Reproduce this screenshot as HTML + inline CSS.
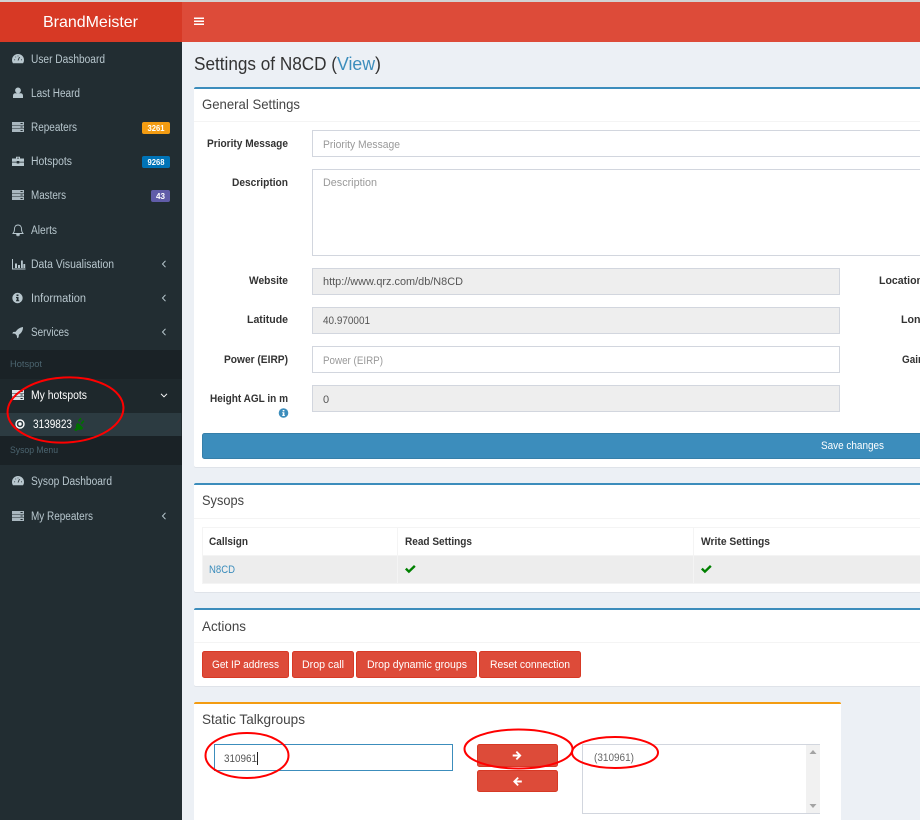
<!DOCTYPE html>
<html lang="en">
<head>
<meta charset="utf-8">
<title>BrandMeister - Settings of N8CD</title>
<style>
html,body{margin:0;padding:0;width:920px;height:820px;overflow:hidden;background:#ecf0f5}
svg{display:block}
text{font-family:"Liberation Sans",sans-serif}
.n{font-size:11.5px;fill:#b8c7ce}
.w{font-size:11.5px;fill:#fff}
.s{font-size:9.5px;fill:#4b646f}
.t{font-size:14px;fill:#444}
.l{font-size:11px;font-weight:bold;fill:#333}
.p{font-size:11px;fill:#999}
.v{font-size:11px;fill:#555}
.b{font-size:11px;fill:#fff}
.bd{font-size:8.5px;font-weight:bold;fill:#fff}
.in{fill:#fff;stroke:#d2d6de}
.ro{fill:#eee;stroke:#d2d6de}
.btn{fill:#dd4b39;stroke:#d73925}
.e{fill:none;stroke:#f00;stroke-width:2}
</style>
</head>
<body>
<svg width="920" height="820" viewBox="0 0 920 820" xmlns="http://www.w3.org/2000/svg">
<defs>
<g id="gauge"><path d="M0 6C0 2.500 2.700 0 6 0s6 2.500 6 6c0 1.300-.3 2.300-1 3.200H1C.3 8.300 0 7.300 0 6z" fill="#b8c7ce"/><path d="M6 6.500L7.500 3M2.200 5.800h.9M9 5.800h.9M3.500 3h.6M6 1.600v.8" stroke="#222d32" stroke-width=".9"/></g>
<g id="server"><path d="M0 0h12v3H0zM0 3.500h12v3H0zM0 7h12v3H0z" fill="#b8c7ce" opacity=".9"/><path d="M8.500 1.500h2.200M8.500 5h2.200M8.500 8.500h2.200" stroke="#222d32" stroke-width=".9"/></g>
<g id="serverw"><path d="M0 0h12v3H0zM0 3.500h12v3H0zM0 7h12v3H0z" fill="#d9e2e6"/><path d="M8.500 1.500h2.200M8.500 5h2.200M8.500 8.500h2.200" stroke="#1e282c" stroke-width=".9"/></g>
<g id="brief"><path d="M0 2.500h12v3.300H7.300v-.8H4.700v.8H0zM0 6.500h4.700v1h2.600v-1H12V10H0zM4 2.500V.8h4v1.700H7V1.700H5v.8z" fill="#b8c7ce"/></g>
<path id="chev" d="M3 0L0 3.200L3 6.400" fill="none" stroke="#b8c7ce" stroke-width="1"/>
<path id="chk" d="M0 4.500L1.700 2.800L3.900 5L9 0L10.700 1.700L3.900 8.200z" fill="#008000"/>
</defs>

<!-- page chrome -->
<rect width="920" height="820" fill="#ecf0f5"/>
<rect width="920" height="2" fill="#d2d2d2"/>
<rect x="182" y="2" width="738" height="40" fill="#dd4b39"/>
<rect x="0" y="2" width="182" height="40" fill="#d73925"/>
<text x="43" y="27" font-size="16" fill="#fff" textLength="95" lengthAdjust="spacingAndGlyphs">BrandMeister</text>
<path d="M194 17.500h10v1.500h-10zM194 20.500h10v1.500h-10zM194 23.500h10v1.500h-10z" fill="#fff"/>

<!-- sidebar -->
<rect x="0" y="42" width="182" height="778" fill="#222d32"/>
<rect x="0" y="350" width="182" height="29" fill="#1a2226"/>
<rect x="0" y="379" width="182" height="34" fill="#1e282c"/>
<rect x="0" y="413" width="181" height="23" fill="#2c3b41"/>
<rect x="0" y="436" width="182" height="29" fill="#1a2226"/>

<text class="n" x="31" y="63" textLength="74" lengthAdjust="spacingAndGlyphs">User Dashboard</text>
<text class="n" x="31" y="97" textLength="49" lengthAdjust="spacingAndGlyphs">Last Heard</text>
<text class="n" x="31" y="131" textLength="46" lengthAdjust="spacingAndGlyphs">Repeaters</text>
<text class="n" x="31" y="165" textLength="41" lengthAdjust="spacingAndGlyphs">Hotspots</text>
<text class="n" x="31" y="199" textLength="35" lengthAdjust="spacingAndGlyphs">Masters</text>
<text class="n" x="31" y="234" textLength="26" lengthAdjust="spacingAndGlyphs">Alerts</text>
<text class="n" x="31" y="268" textLength="83" lengthAdjust="spacingAndGlyphs">Data Visualisation</text>
<text class="n" x="31" y="302" textLength="55" lengthAdjust="spacingAndGlyphs">Information</text>
<text class="n" x="31" y="336" textLength="38" lengthAdjust="spacingAndGlyphs">Services</text>
<text class="s" x="10" y="367" textLength="32" lengthAdjust="spacingAndGlyphs">Hotspot</text>
<text class="w" x="31" y="399" textLength="56" lengthAdjust="spacingAndGlyphs">My hotspots</text>
<text class="w" x="33" y="428" textLength="39" lengthAdjust="spacingAndGlyphs">3139823</text>
<text class="s" x="10" y="453" textLength="48" lengthAdjust="spacingAndGlyphs">Sysop Menu</text>
<text class="n" x="31" y="485" textLength="81" lengthAdjust="spacingAndGlyphs">Sysop Dashboard</text>
<text class="n" x="31" y="520" textLength="62" lengthAdjust="spacingAndGlyphs">My Repeaters</text>

<!-- sidebar icons -->
<use href="#gauge" x="12" y="54"/>
<path d="M18 87.500a2.900 2.900 0 1 1 0 5.800a2.900 2.900 0 0 1 0-5.800zM13 98v-2.300c0-1.400 1-2.400 2.300-2.400h5.400c1.300 0 2.300 1 2.300 2.400V98z" fill="#b8c7ce"/>
<use href="#server" x="12" y="122"/>
<use href="#brief" x="12" y="156"/>
<use href="#server" x="12" y="190"/>
<path d="M18 225c-2.500 0-3.500 2-3.500 4c0 2.500-.7 3.500-1.500 4.500h10c-.8-1-1.500-2-1.500-4.500c0-2-1-4-3.500-4zM16.700 234.500h2.600c0 .8-.6 1.300-1.300 1.300s-1.300-.5-1.300-1.300z" fill="none" stroke="#b8c7ce" stroke-width=".9"/>
<path d="M12.500 259v10h13" fill="none" stroke="#b8c7ce"/>
<path d="M15 263.500h2v4.500h-2zM18 265h2v3h-2zM21 260.500h1.800v7.500H21zM23.400 264h1.800v4h-1.800z" fill="#b8c7ce"/>
<circle cx="17.500" cy="298" r="5.200" fill="#b8c7ce"/><path d="M16.500 294.500h2v1.600h-2zM16 297h2.500v3.300h.7v1h-3.200v-1h.7V298H16z" fill="#222d32"/>
<path d="M23 327c-3 .4-5.500 2-7.300 4.700l-2.600.3l-.8 1.500l2.800.3l1.700 1.800l.3 2.700l1.500-.9l.3-2.600c2.700-1.900 4.200-4.600 4.100-7.800z" fill="#b8c7ce"/>
<use href="#serverw" x="12" y="390"/>
<circle cx="20" cy="424" r="4" fill="none" stroke="#fff" stroke-width="1.400"/><circle cx="20" cy="424" r="1.700" fill="#fff"/>
<path d="M74 430l2.300-2.500l-.6-.7l.7-2.900l1.600-1l5.200 4.800l-1 1.700l-2.900.7l-.8-.7l-2.500 1.900zM80.600 423.300l2.600-3.200l1.200 1.100l-2.500 3.200zM77.800 420.800l2.600-3l1.200 1.100l-2.600 3z" fill="#007000"/>
<use href="#gauge" x="12" y="476"/>
<use href="#server" x="12" y="511"/>

<!-- chevrons -->
<use href="#chev" x="162.500" y="260.800"/>
<use href="#chev" x="162.500" y="294.800"/>
<use href="#chev" x="162.500" y="328.800"/>
<use href="#chev" x="162.500" y="512.800"/>
<path d="M161 393.800L164 396.800L167 393.800" fill="none" stroke="#fff" stroke-width="1"/>

<!-- badges -->
<rect x="142" y="122" width="28" height="12" rx="2" fill="#f39c12"/>
<text class="bd" x="147.500" y="131" textLength="17" lengthAdjust="spacingAndGlyphs">3261</text>
<rect x="142" y="156" width="28" height="12" rx="2" fill="#0073b7"/>
<text class="bd" x="147.500" y="165" textLength="17" lengthAdjust="spacingAndGlyphs">9268</text>
<rect x="151" y="190" width="19" height="12" rx="2" fill="#605ca8"/>
<text class="bd" x="156" y="199" textLength="9" lengthAdjust="spacingAndGlyphs">43</text>

<!-- page title -->
<text x="194" y="70" font-size="18" fill="#333" textLength="143" lengthAdjust="spacingAndGlyphs">Settings of N8CD (</text>
<text x="337" y="70" font-size="18" fill="#3c8dbc" textLength="38" lengthAdjust="spacingAndGlyphs">View</text>
<text x="375" y="70" font-size="18" fill="#333">)</text>

<!-- General settings -->
<rect x="194" y="88" width="740" height="380" rx="2" fill="#dfe3e9"/>
<rect x="194" y="87" width="740" height="380" rx="2" fill="#fff"/>
<path d="M194 89a2 2 0 0 1 2-2H934v2z" fill="#3c8dbc"/>
<rect x="194" y="121" width="740" height="1" fill="#f4f4f4"/>
<text class="t" x="202" y="109" textLength="98" lengthAdjust="spacingAndGlyphs">General Settings</text>

<text class="l" x="207" y="147" textLength="81" lengthAdjust="spacingAndGlyphs">Priority Message</text>
<text class="l" x="232" y="186" textLength="56" lengthAdjust="spacingAndGlyphs">Description</text>
<text class="l" x="249" y="284" textLength="39" lengthAdjust="spacingAndGlyphs">Website</text>
<text class="l" x="247" y="323" textLength="41" lengthAdjust="spacingAndGlyphs">Latitude</text>
<text class="l" x="224" y="363" textLength="64" lengthAdjust="spacingAndGlyphs">Power (EIRP)</text>
<text class="l" x="210" y="402" textLength="78" lengthAdjust="spacingAndGlyphs">Height AGL in m</text>
<circle cx="283.500" cy="413" r="4.800" fill="#3c8dbc"/>
<path d="M282.700 410h1.700v1.400h-1.700zM282.200 412.200h2.200v3h.6v.8h-2.900v-.8h.6v-2.200h-.5z" fill="#fff"/>
<text class="l" x="879" y="284" textLength="44" lengthAdjust="spacingAndGlyphs">Location</text>
<text class="l" x="901" y="323" textLength="26" lengthAdjust="spacingAndGlyphs">Long</text>
<text class="l" x="902" y="363" textLength="22" lengthAdjust="spacingAndGlyphs">Gain</text>

<rect class="in" x="312.500" y="130.500" width="640" height="26"/>
<text class="p" x="323" y="148" textLength="77" lengthAdjust="spacingAndGlyphs">Priority Message</text>
<rect class="in" x="312.500" y="169.500" width="640" height="86"/>
<text class="p" x="323" y="186" textLength="54" lengthAdjust="spacingAndGlyphs">Description</text>
<rect class="ro" x="312.500" y="268.500" width="527" height="26"/>
<text class="v" x="323" y="285" textLength="140" lengthAdjust="spacingAndGlyphs">http://www.qrz.com/db/N8CD</text>
<rect class="ro" x="312.500" y="307.500" width="527" height="26"/>
<text class="v" x="323" y="324" textLength="47" lengthAdjust="spacingAndGlyphs">40.970001</text>
<rect class="in" x="312.500" y="346.500" width="527" height="26"/>
<text class="p" x="323" y="364" textLength="60" lengthAdjust="spacingAndGlyphs">Power (EIRP)</text>
<rect class="ro" x="312.500" y="385.500" width="527" height="26"/>
<text class="v" x="323" y="403">0</text>

<rect x="202.500" y="433.500" width="740" height="25" rx="2" fill="#3c8dbc" stroke="#367fa9"/>
<text class="b" x="821" y="449" textLength="63" lengthAdjust="spacingAndGlyphs">Save changes</text>

<!-- Sysops -->
<rect x="194" y="484" width="740" height="109" rx="2" fill="#dfe3e9"/>
<rect x="194" y="483" width="740" height="109" rx="2" fill="#fff"/>
<path d="M194 485a2 2 0 0 1 2-2H934v2z" fill="#3c8dbc"/>
<rect x="194" y="518" width="740" height="1" fill="#f4f4f4"/>
<text class="t" x="202" y="505" textLength="42" lengthAdjust="spacingAndGlyphs">Sysops</text>
<rect x="202.500" y="527.500" width="740" height="56" fill="#fff" stroke="#f4f4f4"/>
<rect x="203" y="556" width="740" height="27" fill="#ededed"/>
<path d="M203 555.500h720M397.500 528v56M693.500 528v56" stroke="#f4f4f4"/>
<text class="l" x="209" y="545" textLength="39" lengthAdjust="spacingAndGlyphs">Callsign</text>
<text class="l" x="405" y="545" textLength="67" lengthAdjust="spacingAndGlyphs">Read Settings</text>
<text class="l" x="701" y="545" textLength="69" lengthAdjust="spacingAndGlyphs">Write Settings</text>
<text x="209" y="573" font-size="11" fill="#3c8dbc" textLength="26" lengthAdjust="spacingAndGlyphs">N8CD</text>
<use href="#chk" x="405" y="565"/>
<use href="#chk" x="701" y="565"/>

<!-- Actions -->
<rect x="194" y="609" width="740" height="78" rx="2" fill="#dfe3e9"/>
<rect x="194" y="608" width="740" height="78" rx="2" fill="#fff"/>
<path d="M194 610a2 2 0 0 1 2-2H934v2z" fill="#3c8dbc"/>
<rect x="194" y="642" width="740" height="1" fill="#f4f4f4"/>
<text class="t" x="202" y="631" textLength="44" lengthAdjust="spacingAndGlyphs">Actions</text>
<rect class="btn" x="202.500" y="651.500" width="86" height="26" rx="2"/>
<rect class="btn" x="292.500" y="651.500" width="61" height="26" rx="2"/>
<rect class="btn" x="356.500" y="651.500" width="120" height="26" rx="2"/>
<rect class="btn" x="479.500" y="651.500" width="101" height="26" rx="2"/>
<text class="b" x="212" y="668" textLength="67" lengthAdjust="spacingAndGlyphs">Get IP address</text>
<text class="b" x="302" y="668" textLength="42" lengthAdjust="spacingAndGlyphs">Drop call</text>
<text class="b" x="367" y="668" textLength="100" lengthAdjust="spacingAndGlyphs">Drop dynamic groups</text>
<text class="b" x="490" y="668" textLength="80" lengthAdjust="spacingAndGlyphs">Reset connection</text>

<!-- Static talkgroups -->
<rect x="194" y="702" width="647" height="130" rx="2" fill="#fff"/>
<path d="M194 704a2 2 0 0 1 2-2H839a2 2 0 0 1 2 2z" fill="#f39c12"/>
<text class="t" x="202" y="724" textLength="103" lengthAdjust="spacingAndGlyphs">Static Talkgroups</text>
<rect x="214.500" y="744.500" width="238" height="26" fill="#fff" stroke="#3c8dbc"/>
<text class="v" x="224" y="762" textLength="33" lengthAdjust="spacingAndGlyphs">310961</text>
<path d="M257.500 752v13" stroke="#222"/>
<rect class="btn" x="477.500" y="744.500" width="80" height="22" rx="2"/>
<rect class="btn" x="477.500" y="770.500" width="80" height="21" rx="2"/>
<path d="M517 751l4.500 4.500l-4.500 4.500l-1.300-1.300l2.200-2.200h-5.200v-2h5.200l-2.200-2.200z" fill="#fff"/>
<path d="M517.500 777l-4.500 4.500l4.500 4.500l1.300-1.300l-2.200-2.200h5.200v-2h-5.200l2.200-2.200z" fill="#fff"/>
<rect x="582.500" y="744.500" width="237" height="69" fill="#fff" stroke="#d2d6de"/>
<rect x="806" y="745" width="14" height="68" fill="#f1f1f1"/>
<path d="M813 750l3.500 4h-7z" fill="#a3a3a3"/>
<path d="M813 808l3.500-4h-7z" fill="#a3a3a3"/>
<text x="594" y="761" font-size="11" fill="#666" textLength="40" lengthAdjust="spacingAndGlyphs">(310961)</text>

<!-- hand-drawn annotations -->
<ellipse class="e" cx="65.500" cy="410" rx="58" ry="32.500" transform="rotate(-3 65.500 410)"/>
<ellipse class="e" cx="247" cy="755.500" rx="41.500" ry="22.500"/>
<ellipse class="e" cx="518.500" cy="749" rx="54" ry="19.500"/>
<ellipse class="e" cx="615" cy="752.500" rx="43" ry="15.500"/>
</svg>
</body>
</html>
